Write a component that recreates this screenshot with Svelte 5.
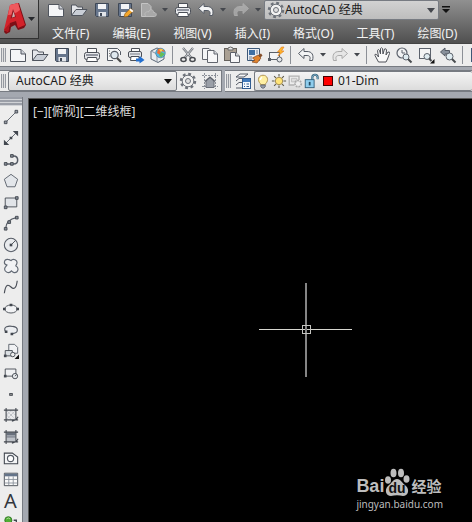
<script>
  let workspace = "AutoCAD 经典";
  let layer = "01-Dim";

  const menus = ["文件(F)", "编辑(E)", "视图(V)", "插入(I)", "格式(O)", "工具(T)", "绘图(D)"];
  const quick = ["new", "open", "save", "saveas", "sheet", "caret", "print", "undo", "caret", "redo", "caret"];
  const standard = [
    "new", "open", "save", "|",
    "print", "preview", "publish", "globe", "|",
    "cut", "copy", "paste", "brush", "block", "|",
    "undo", "caret", "redo", "caret", "|",
    "hand", "zoom", "zoomwin", "zoomprev", "|",
    "panel",
  ];
  const draw = [
    "line", "xline", "pline", "polygon", "rect", "arc", "circle", "cloud", "spline", "ellipse",
    "earc", "insert", "makeblock", "point", "hatch", "gradient", "region", "table", "mtext", "addsel",
  ];

  // 18 x 18 drawings
  const icons = {
    new: `<path d="M1.5 3.500H12L16.500 8V15.500H1.500Z" fill="#f4f5f7" stroke="#50555e"/><path d="M12 3.500V8H16.500" fill="#cfd2d8" stroke="#50555e"/>`,
    open: `<path d="M1.500 14.500V4H6L7.500 6H12.500V8" fill="#e4e6ea" stroke="#50555e"/><path d="M1.500 14.500L6 8.500H17L12.500 14.500Z" fill="#c9ced6" stroke="#50555e"/>`,
    save: `<path d="M2.500 2.500H15.500V15.500H3.500L2.500 14.500Z" fill="#66758c" stroke="#3f4856"/><path d="M5 3H13V8H5Z" fill="#f3f4f6"/><path d="M5.500 11H13V15.500H5.500Z" fill="#e3e6ea"/><path d="M7 12H9V15H7Z" fill="#3f4856"/>`,
    saveas: `<path d="M2.500 2.500H15.500V15.500H3.500L2.500 14.500Z" fill="#66758c" stroke="#3f4856"/><path d="M5 3H13V8H5Z" fill="#f3f4f6"/><path d="M5 11H10V15H5Z" fill="#e3e6ea"/><path d="M8 16L9 12.500L14.500 7.500L17.500 10L11.500 15.500Z" fill="#f4a62a" stroke="#8c5c20" stroke-width=".7"/><path d="M14.500 7.500L17.500 10L16.200 11.200L13.200 8.700Z" fill="#fff"/>`,
    sheet: `<path d="M2.500 2.500H9L12 5.500V15.500H2.500Z" fill="#a8a8a8" stroke="#c4c4c4"/><path d="M7 15.500C4 12 8 10 9.500 11C11 7 15 9 14.500 11.500C18 11 18 15.500 15.500 15.500Z" fill="#a8a8a8" stroke="#bdbdbd"/>`,
    print: `<path d="M4.500 7V2.500H13.500V7" fill="#fafafa" stroke="#4b4f57"/><rect x="1.500" y="6.500" width="15" height="7" rx="2" fill="#e6e8eb" stroke="#4b4f57"/><path d="M3 9H15" stroke="#777d88" stroke-width="1.500"/><path d="M4.500 11.500H13.500L14.500 15.500H3.500Z" fill="#fff" stroke="#4b4f57"/>`,
    preview: `<path d="M8 14.500H2.500V2.500H12.500L15.500 5.500V9" fill="#f5f6f7" stroke="#555b65"/><path d="M4 5H5M4 7.500H5M4 10H5" stroke="#777"/><circle cx="9.500" cy="9" r="3.700" fill="#e0e9ef" stroke="#555b65" stroke-width="1.200"/><path d="M12 12L16 16" stroke="#4a4a4a" stroke-width="2.200"/>`,
    publish: `<path d="M4.500 6V2.500H12.500V6" fill="#fafafa" stroke="#4b4f57"/><rect x="1.500" y="5.500" width="13" height="6" rx="1.500" fill="#e6e8eb" stroke="#4b4f57"/><path d="M3 8H13" stroke="#777d88"/><path d="M4 10.500H12V14.500H3.500Z" fill="#fff" stroke="#4b4f57"/><path d="M9 12.500H12.500V10L17.500 14L12.500 17.500V15.500H9Z" fill="#226fd0"/>`,
    globe: `<path d="M2 5L8 2L15 5V13L9 16.500L2 13Z" fill="#e9ecef" stroke="#596575"/><path d="M2 5L8 8V16" fill="none" stroke="#8c96a3"/><circle cx="11.500" cy="7" r="4.800" fill="#54b3df" stroke="#3a789b" stroke-width=".6"/><path d="M9 3Q13 1 16 6L12 5L11 9L8 7Z" fill="#f06d35"/><path d="M12 6L16 8L12 11.500L10 9Z" fill="#66bd54"/><path d="M10 3.500L14 3L12 6Z" fill="#f7da45"/>`,
    cut: `<path d="M4 2L12.500 12M14 2L5.500 12" stroke="#6d7178" stroke-width="2.200"/><path d="M4 2L12.500 12M14 2L5.500 12" stroke="#e1e3e6" stroke-width=".8"/><ellipse cx="4.500" cy="13.500" rx="2.600" ry="2" fill="none" stroke="#484b50" stroke-width="1.500"/><ellipse cx="13.500" cy="13.500" rx="2.600" ry="2" fill="none" stroke="#484b50" stroke-width="1.500"/>`,
    copy: `<path d="M1.500 2.500H8L10.500 5V13.500H1.500Z" fill="#f4f5f6" stroke="#62666e"/><path d="M6.500 4.500H13L16.500 8V16.500H6.500Z" fill="#f7f7f8" stroke="#62666e"/><path d="M13 4.500V8H16.500" fill="#d6d9dd" stroke="#62666e"/>`,
    paste: `<rect x="1.500" y="2.500" width="12" height="12" fill="#aaa093" stroke="#66625d"/><path d="M5 4V2L7.500 1L10 2V4Z" fill="#e7e7e7" stroke="#666"/><path d="M7.500 6.500H12.500L16.500 10V16.500H7.500Z" fill="#f7f7f8" stroke="#5c6068"/><path d="M12.500 6.500V10H16.500" fill="#d6d9dd" stroke="#5c6068"/>`,
    brush: `<path d="M2.500 2.500H14.500V14.500H2.500Z" fill="#e9edf3" stroke="#3d5877"/><path d="M4 4H10V9H4Z" fill="#3f70a4"/><path d="M11 5H13M11 7H13M4 11H7M4 13H7" stroke="#6d7f95"/><path d="M7.500 12L13 9L16 12L12 17L7 16L10 14Z" fill="#df832d" stroke="#8b4b20" stroke-width=".7"/><path d="M13 9L16 7.500L17.500 9.500L15.500 11.500Z" fill="#85502c"/>`,
    block: `<rect x="2.500" y="6.500" width="10" height="7" fill="#f4f4f5" stroke="#5a6069"/><path d="M1 12H4V15H1Z" fill="#5a6069"/><circle cx="12.500" cy="13.500" r="2.500" fill="#e5e7ea" stroke="#5a6069"/><path d="M14.500 1L10.500 6H13L11 10L17 5H14.500L17 1Z" fill="#ffb52c" stroke="#df7b1d" stroke-width=".6"/>`,
    undo: `<path d="M1.500 7.500L7 2.500V5.500H10C15 5.500 17 9 15.500 14.500H12.500C14 11 12.500 9.500 10 9.500H7V12.500Z" fill="#f3f4f5" stroke="#565c66"/>`,
    redo: `<path d="M16.500 7.500L11 2.500V5.500H8C3 5.500 1 9 2.500 14.500H5.500C4 11 5.500 9.500 8 9.500H11V12.500Z" fill="#dcdcdc" fill-opacity=".4" stroke="#aaa"/>`,
    caret: `<path d="M6 7H12L9 10.500Z" fill="#44474d"/>`,
    hand: `<path d="M5.500 16L2 9.500Q1.500 7.500 3.500 8.500L5.500 11L4.500 4.500Q5 2.500 6.500 4.500L7.500 8L7.500 2.500Q8.500 1 9.500 2.500L10 8L11.500 3Q13 2 13.500 4L13 9L15 6Q17 5.500 16.500 7.500L14.500 13L13 16Z" fill="#fafafa" stroke="#4e5158"/>`,
    zoom: `<circle cx="7" cy="7" r="5" fill="#f1f2f3" stroke="#5c626c" stroke-width="1.200"/><path d="M7 4V7H10" fill="none" stroke="#5c626c"/><circle cx="11" cy="11" r="3" fill="#dfebf0" stroke="#5c626c"/><path d="M13 13L16.500 16.500" stroke="#494c50" stroke-width="2"/>`,
    zoomwin: `<rect x="2.500" y="2.500" width="11" height="10" fill="#f4f4f5" stroke="#5c626c"/><circle cx="10" cy="10.500" r="3" fill="#dfebf0" stroke="#5c626c"/><path d="M12 12.500L14.500 15" stroke="#494c50" stroke-width="2"/><path d="M17.500 13V17.500H13Z" fill="#111"/>`,
    zoomprev: `<path d="M1.500 6L6 2V4.500H10.500V8H6V10Z" fill="#88909b" stroke="#545a64"/><circle cx="10.500" cy="10.500" r="3.500" fill="#dfebf0" stroke="#5c626c"/><path d="M13 13L16.500 16.500" stroke="#494c50" stroke-width="2"/>`,
    panel: `<rect x="2.500" y="2.500" width="13" height="13" fill="#eef1f4" stroke="#3f5877"/><path d="M3 3H15V6H3Z" fill="#4774a4"/>`,
    gear: `<circle cx="9" cy="9" r="7" fill="none" stroke="#6d727a" stroke-width="2.400" stroke-dasharray="2.800 2.698"/><circle cx="9" cy="9" r="5.800" fill="#f1f1f1" stroke="#6d727a"/><circle cx="9" cy="9" r="2.500" fill="#e0e0e0" stroke="#6d727a"/>`,
    wsmy: `<path d="M3.500 1V17M14.500 1V17M1 3.500H17M1 14.500H17" stroke="#8b9099" stroke-dasharray="2 1"/><path d="M5 15.500V9L9 5.500L13 9V15.500Z" fill="#9a9fa8" stroke="#6a6f79"/><path d="M4 9.500L9 5L14 9.500" fill="none" stroke="#5e636d" stroke-width="1.300"/>`,
    layers: `<path d="M2 5L6 2H14L10 5ZM2 9L5 6.500H10M2 13L5 10.500H9M2 16H9" fill="#f6f6f7" stroke="#555b66"/><rect x="8.500" y="6.500" width="8" height="10" fill="#f4f8fd" stroke="#315c91"/><path d="M9 7H16V10H9Z" fill="#4079bb"/><path d="M10 12H11M12.500 12H15M10 14.500H11M12.500 14.500H15" stroke="#315c91"/>`,
    bulb: `<path d="M6 12C2 8 4 2.500 9 2.500S16 8 12 12V13H6Z" fill="#fff0a2" stroke="#a98b47"/><path d="M8 5Q6 6 6 8" fill="none" stroke="#fff" stroke-width="1.500"/><path d="M6.500 13.500H11.500V15.500L10 17H8L6.500 15.500Z" fill="#949aa5" stroke="#626975"/>`,
    sun: `<path d="M9 1V4M9 14V17M1 9H4M14 9H17M3.500 3.500L5.500 5.500M12.500 12.500L14.500 14.500M14.500 3.500L12.500 5.500M5.500 12.500L3.500 14.500" stroke="#5d5a4a" stroke-width="1.200"/><circle cx="9" cy="9" r="4.200" fill="#ffe477" stroke="#99824a"/>`,
    freeze: `<path d="M8 13.500H2.500V3.500H13.500V8" fill="#ededed" stroke="#b1b1b1" stroke-width="1.500"/><path d="M5 6H11V10H5Z" fill="#ddd" stroke="#bbb"/><circle cx="12.500" cy="12" r="3.500" fill="#eee" stroke="#aaa" stroke-width="2" stroke-dasharray="2 1"/>`,
    lock: `<path d="M10.500 8V5C10.500 1 16.500 1 16.500 5V7" fill="none" stroke="#345c75" stroke-width="2.400"/><path d="M10.500 8V5C10.500 1 16.500 1 16.500 5V7" fill="none" stroke="#9cd4ed" stroke-width=".8"/><rect x="2.500" y="7.500" width="10" height="9" fill="#8ecded" stroke="#315d78"/><path d="M7.500 10V14" stroke="#244b62" stroke-width="2"/>`,
    line: `<path d="M3 15L15 3" stroke="#555b65"/><path d="M1.500 13.500H4.500V16.500H1.500ZM13.500 1.500H16.500V4.500H13.500Z" fill="#999fa8" stroke="#42474f"/>`,
    xline: `<path d="M3 15L15 3" stroke="#555b65"/><path d="M1 17V11L7 17ZM17 1V7L11 1ZM7.500 7.500H10.500V10.500H7.500Z" fill="#42474f"/>`,
    pline: `<path d="M3 14.500H12C18 14.500 18 5.500 12 5.500H9" fill="none" stroke="#555b65" stroke-width="1.700"/><path d="M1.500 13H4.500V16H1.500ZM8.500 13H11.500V16H8.500ZM8.500 4H11.500V7H8.500Z" fill="#858b95" stroke="#42474f"/>`,
    polygon: `<path d="M9 1.500L16.500 7L13.500 15.500H4.500L1.500 7Z" fill="#e3e6ea" stroke="#555b65"/>`,
    rect: `<path d="M2.500 4.500H15.500V14.500H2.500Z" fill="#e1e4e8" stroke="#42474f"/><path d="M1.500 13.500H4.500V16.500H1.500ZM14 3H17V6H14Z" fill="#858b95" stroke="#42474f"/>`,
    arc: `<path d="M3 15Q4 5 15 3" fill="none" stroke="#555b65" stroke-width="1.300"/><path d="M1.500 14H4.500V17H1.500ZM5.500 6.500H8.500V9.500H5.500ZM14 1.500H17V4.500H14Z" fill="#858b95" stroke="#42474f"/>`,
    circle: `<circle cx="9" cy="9" r="7.500" fill="#e9ebee" stroke="#555b65" stroke-width="1.200"/><path d="M9 9L14 4" stroke="#42474f"/><path d="M7.500 7.500H10.500V10.500H7.500Z" fill="#42474f"/>`,
    cloud: `<path d="M4.500 8C0 7 1 1 5.500 1.500C7.500 1.500 8.500 3 9 3C11 0 17 2 15.500 6.500C15 8 14 8.500 14.500 9C18.500 11 17 17 12.500 16.500C10.500 16 10 15 9.500 14.500C7 18 1 16 2 11.500C2.500 10 4 9 4.500 8Z" fill="#f1f2f4" stroke="#626974" stroke-width="1.300"/>`,
    spline: `<path d="M1.500 16C3 5 6 6 9 9C12 12 15 11 16 2" fill="none" stroke="#484d56" stroke-width="1.300"/>`,
    ellipse: `<ellipse cx="9" cy="9" rx="7" ry="4.500" fill="#f1f2f4" stroke="#42474f"/><path d="M0 7.500H3V10.500H0ZM15 7.500H18V10.500H15ZM7.500 3H10.500V6H7.500Z" fill="#42474f"/>`,
    earc: `<path d="M3 11C-1 5 7 4 11 5C18 6 18 13 10 13" fill="#eceef1" stroke="#555b65" stroke-width="1.300"/><path d="M2 9.500H5V12.500H2ZM8.500 12H11.500V15H8.500Z" fill="#42474f"/>`,
    insert: `<path d="M6.500 1.500H13L16.500 5V11.500H6.500Z" fill="#f1f2f4" stroke="#555b65"/><path d="M2.500 8.500H10.500V14.500H2.500Z" fill="#dce0e4" stroke="#42474f"/><path d="M1 13H4V16H1Z" fill="#42474f"/><circle cx="11" cy="13" r="2.500" fill="#eee" stroke="#42474f"/><path d="M18 13V18H13Z" fill="#111"/>`,
    makeblock: `<path d="M2.500 4.500H14.500V12.500H2.500Z" fill="#f0f1f3" stroke="#42474f"/><path d="M1 11H4V14H1Z" fill="#42474f"/><circle cx="13.500" cy="12.500" r="3" fill="#e5e7ea" stroke="#42474f"/><path d="M13.500 12.500L15.500 10.500" stroke="#42474f"/>`,
    point: `<rect x="7.500" y="8.500" width="3" height="2" fill="#999" stroke="#42474f"/>`,
    hatch: `<path d="M4 4H14V14H4Z" fill="#e9eaec"/><path d="M5 5L13 13M9 4L14 9M4 9L9 14M5 13L13 5M4 9L9 4" stroke="#9da1a8" stroke-dasharray="1 1"/><path d="M3.500 1V17M1 3.500H17M1 14.500H17M14.500 1V14.500M10 16Q15 15 17 11" fill="none" stroke="#42474f" stroke-width="1.200"/>`,
    gradient: `<path d="M4 4H14V7H4Z" fill="#69707c"/><path d="M4 7H14V10H4Z" fill="#8c929c"/><path d="M4 10H14V14H4Z" fill="#bec2c8"/><path d="M3.500 1V17M1 3.500H17M1 14.500H17M14.500 1V14.500M10 16Q15 15 17 11" fill="none" stroke="#42474f" stroke-width="1.200"/>`,
    region: `<path d="M1.500 3.500H10.500L16.500 8V15.500H1.500Z" fill="#f4f5f6" stroke="#42474f" stroke-width="1.200"/><circle cx="8.500" cy="9.500" r="3.500" fill="#fff" stroke="#555b65" stroke-width="1.300"/>`,
    table: `<path d="M1.500 2.500H16.500V16.500H1.500Z" fill="#fafafa" stroke="#42474f"/><path d="M2 3H16V6H2Z" fill="#64748a"/><path d="M2 9.500H16M2 13.500H16M6.500 6V16M11.500 6V16" stroke="#8a919c"/>`,
    addsel: `<circle cx="6" cy="7" r="4" fill="#50ad33" stroke="#2f7625"/><path d="M4 5.500Q6 3.500 8 5.500" fill="none" stroke="#b4e49e"/><path d="M12 7H15V10" fill="none" stroke="#42474f" stroke-width="1.500"/>`,
  };
</script>

{#snippet icon(name)}
  <svg width="18" height="18" viewBox="0 0 18 18" fill="none" aria-hidden="true">{@html icons[name]}</svg>
{/snippet}

{#snippet tool(name)}
  {#if name === "|"}
    <span class="sep"></span>
  {:else}
    <button class="tool" class:caret={name === "caret"} aria-label={name}>
      {#if name === "mtext"}<span class="letter">A</span>{:else}{@render icon(name)}{/if}
    </button>
  {/if}
{/snippet}

<div class="app">
  <header>
    <button class="logo" aria-label="AutoCAD">
      <svg width="38" height="38" viewBox="0 0 38 38" aria-hidden="true">
        <path d="M4 32L11 5L19 3L26 25L24 28L18 30L15 25L11 27L10 32L6 34Z" fill="#7d0f15" />
        <path d="M4 30L10 5L18 3L25 25L18 28L16 21L10 23L8 32Z" fill="#d3222a" />
        <path d="M10 5L18 3L20 10Q14 15 8 15Z" fill="#ee5a5e" />
        <path d="M13 9L16 17L10.500 18.500Z" fill="#8f1a20" />
        <path d="M13.500 11.500L15 16.500L12 17.500Z" fill="#cbb4b4" />
        <path d="M4 30L10 23L8 32Z" fill="#b0161e" />
        <path d="M28 17H35L31.500 21Z" fill="#26282c" />
      </svg>
    </button>
    <div class="head">
      <div class="quick">
        {#each quick as name}{@render tool(name)}{/each}
        <div class="combo space">
          {@render icon("gear")}
          <select aria-label="工作空间" bind:value={workspace}><option>AutoCAD 经典</option></select>
          <svg class="arrow" width="8" height="5" viewBox="0 0 8 5"><path d="M0 0H8L4 5Z" fill="#44474d" /></svg>
        </div>
        <button class="more" aria-label="自定义">
          <svg width="8" height="8" viewBox="0 0 8 8"><path d="M0 0H8V1.500H0ZM0 3H8L4 7Z" fill="#111" /></svg>
        </button>
      </div>
      <nav>
        {#each menus as item}<button>{item}</button>{/each}
      </nav>
    </div>
  </header>

  <div class="bar">
    <span class="grip"></span>
    {#each standard as name}{@render tool(name)}{/each}
  </div>

  <div class="bars">
    <div class="bar">
      <span class="grip"></span>
      <div class="combo style">
        <select aria-label="工作空间" bind:value={workspace}><option>AutoCAD 经典</option></select>
        <svg class="arrow" width="8" height="5" viewBox="0 0 8 5"><path d="M0 0H8L4 5Z" fill="#111" /></svg>
      </div>
      {@render tool("gear")}
      {@render tool("wsmy")}
    </div>
    <div class="bar grow">
      <span class="grip"></span>
      {@render tool("layers")}
      <div class="combo layer">
        {@render icon("bulb")}
        {@render icon("sun")}
        {@render icon("freeze")}
        {@render icon("lock")}
        <span class="swatch"></span>
        <select aria-label="图层" bind:value={layer}><option>01-Dim</option></select>
      </div>
    </div>
  </div>

  <main>
    <aside>
      <span class="handle"></span>
      <div class="draw">
        {#each draw as name}{@render tool(name)}{/each}
      </div>
    </aside>
    <section class="canvas">
      <div class="view">[−][俯视][二维线框]</div>
      <svg class="cross" width="94" height="94" viewBox="0 0 94 94" aria-hidden="true">
        <path d="M0 46.500H93" stroke="#d6d6d0" />
        <path d="M47 0V94" stroke="#858585" stroke-width="2" />
        <rect x="43.500" y="42.500" width="8" height="8" fill="none" stroke="#c4c4c0" />
      </svg>
      <div class="mark">
        <div class="brand">
          <span>Bai</span>
          <svg width="26" height="28" viewBox="0 0 26 28" aria-hidden="true">
            <g fill="#bdbdbd">
              <ellipse cx="4" cy="12" rx="3" ry="3.800" />
              <ellipse cx="9.500" cy="5" rx="3" ry="4.300" />
              <ellipse cx="17" cy="5" rx="3" ry="4.300" />
              <ellipse cx="22.500" cy="11" rx="3" ry="3.800" />
              <path d="M13 11C17 11 18 15 22 18C26 22 24 28 19 28C15 27 11 27 7 28C2 28 0 22 4 18C8 15 9 11 13 11Z" />
            </g>
            <text x="13" y="25" text-anchor="middle">du</text>
          </svg>
          <span class="cn">经验</span>
        </div>
        <div class="site">jingyan.baidu.com</div>
      </div>
    </section>
  </main>
</div>

<style>
  :global(body) {
    margin: 0;
    overflow: hidden;
  }

  .app {
    display: flex;
    flex-direction: column;
    height: 100vh;
    overflow: hidden;
    background: #a4a8b0;
    font: 12px/18px "Noto Sans", "Noto Sans CJK SC", sans-serif;
    color: #222;
  }

  button {
    padding: 0;
    border: 0;
    background: none;
    font: inherit;
    color: inherit;
  }

  svg {
    display: block;
    flex: none;
  }

  header {
    display: flex;
    flex: none;
    height: 43px;
    background: linear-gradient(#909090, #707070 50%, #505050);
    border-bottom: 1px solid #444;
  }

  .logo {
    flex: none;
    width: 39px;
    height: 39px;
    border: 1px solid #333;
    border-top: 0;
    border-left: 0;
    background: linear-gradient(#a6a6a6, #767676);
  }

  .head {
    flex: 1;
    min-width: 0;
  }

  .quick {
    display: flex;
    align-items: center;
    height: 20px;
    padding-left: 5px;
  }

  .tool {
    display: flex;
    flex: none;
    align-items: center;
    justify-content: center;
    width: 22px;
    height: 21px;
  }

  .quick .tool {
    width: 23px;
  }

  .tool.caret,
  .quick .tool.caret {
    width: 12px;
  }

  .combo {
    display: flex;
    align-items: center;
    box-sizing: border-box;
    height: 20px;
    border: 1px solid #777b82;
    border-radius: 2px;
    background: linear-gradient(#f4f4f4, #dcdcdc);
  }

  .space {
    flex: 0 0 175px;
    padding: 0 3px 0 2px;
    background: linear-gradient(#d2d2d2, #bdbdbd);
  }

  select {
    flex: 1;
    min-width: 0;
    height: 18px;
    padding: 0;
    border: 0;
    appearance: none;
    background: none;
    font: inherit;
    color: #1c1c1c;
  }

  .more {
    padding-left: 3px;
  }

  nav {
    display: flex;
    gap: 23px;
    padding: 5px 0 0 13px;
    color: #f2f2f2;
    white-space: nowrap;
  }

  .bar {
    display: flex;
    flex: none;
    align-items: center;
    height: 22px;
    background: #ededed;
    border-bottom: 1px solid #777b82;
    overflow: hidden;
  }

  .grip {
    flex: none;
    width: 5px;
    height: 14px;
    margin: 0 1px;
    background: repeating-linear-gradient(90deg, #9599a1 0 1px, #e0e0e0 1px 2px);
  }

  .sep {
    flex: none;
    width: 1px;
    height: 18px;
    margin: 0 4px 0 3px;
    background: #8c9097;
  }

  .bars {
    display: flex;
    flex: none;
    gap: 3px;
    margin: 3px 0 5px;
  }

  .bars .bar {
    border-top: 1px solid #777b82;
    height: 20px;
  }

  .bars .bar:first-child {
    border-right: 1px solid #777b82;
  }

  .grow {
    flex: 1;
    min-width: 0;
  }

  .style {
    width: 169px;
    padding: 0 4px 0 7px;
    margin-left: 1px;
  }

  .layer {
    flex: 1;
    min-width: 0;
    border-right: 0;
  }

  .layer svg,
  .draw svg {
    width: 16px;
    height: 16px;
  }

  .swatch {
    flex: none;
    width: 8px;
    height: 8px;
    margin: 0 5px 0 4px;
    border: 1px solid #400;
    background: #f00;
  }

  main {
    display: flex;
    flex: 1;
    min-height: 0;
  }

  aside {
    flex: none;
    width: 22px;
    margin-right: 5px;
    border-right: 1px solid #777b82;
    background: #ededed;
    overflow: hidden;
  }

  .handle {
    display: block;
    height: 9px;
    background: repeating-linear-gradient(#9a9ea7 0 2px, #d0d2d6 2px 3px);
  }

  .draw .tool {
    width: 21px;
  }

  .draw .tool:nth-child(3n) {
    margin-bottom: 1px;
  }

  .letter {
    font: 20px/20px "Noto Sans", sans-serif;
    color: #33373e;
  }

  .canvas {
    position: relative;
    flex: 1;
    min-width: 0;
    margin-top: 1px;
    border: 1px solid #555;
    border-width: 1px 0 0 1px;
    background: #000;
    color: #ddd;
  }

  .view {
    padding: 4px;
  }

  .cross {
    position: absolute;
    left: 230px;
    top: 184px;
  }

  .mark {
    position: absolute;
    right: 29px;
    bottom: 10px;
    color: #bdbdbd;
  }

  .brand {
    display: flex;
    align-items: flex-end;
    height: 28px;
    font: bold 18px/20px "Liberation Sans", sans-serif;
  }

  .brand text {
    font: bold 14px "Liberation Sans", sans-serif;
    fill: #111;
  }

  .cn {
    padding-left: 1px;
    font: bold 15px/20px "Noto Sans CJK SC", sans-serif;
  }

  .site {
    font: 10px/16px "Noto Sans", sans-serif;
  }
</style>
